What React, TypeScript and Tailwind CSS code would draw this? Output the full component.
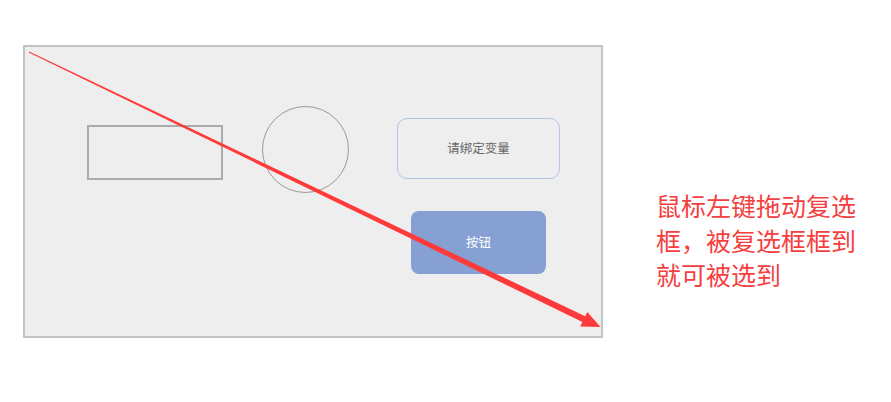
import React from 'react';

const cjk = { fontFamily: '"Microsoft YaHei", "Noto Sans CJK SC", sans-serif' };

export default function App() {
  return (
    <div className="relative w-[891px] h-[402px] bg-white overflow-hidden" style={cjk}>
      <div className="flex pt-[45px] pl-[23px]">
        {/* canvas */}
        <div className="relative w-[580px] h-[293px] border-2 border-[#c3c3c3] bg-[#eeeeee]">
          <div className="absolute left-[62px] top-[78px] w-[136px] h-[55px] border-2 border-[#ababab]" />
          <div className="absolute left-[237px] top-[59px] w-[87px] h-[87px] rounded-full border border-[#999999]" />
          <div className="absolute left-[372px] top-[71px] w-[163px] h-[61px] rounded-[10px] border border-[#b3c3e3] flex items-center justify-center text-[12.5px] text-[#666666]">
            请绑定变量
          </div>
          <div className="absolute left-[386px] top-[164px] w-[135px] h-[63px] rounded-[8px] bg-[#86a0d4] flex items-center justify-center text-[12.5px] text-white">
            按钮
          </div>
        </div>

        {/* note */}
        <div className="ml-[53px] mt-[143px] w-[215px] text-[25px] leading-[34.5px] text-[#f5403f]">
          鼠标左键拖动复选框，被复选框框到就可被选到
        </div>
      </div>

      <svg className="absolute inset-0" width="891" height="402" viewBox="0 0 891 402">
        <polygon
          fill="#ff3a3a"
          points="29.2,51.55 585.2,316.3 587.3,312.0 600.5,327 580.3,326.4 582.4,322.1 28.8,52.45"
        />
      </svg>
    </div>
  );
}
